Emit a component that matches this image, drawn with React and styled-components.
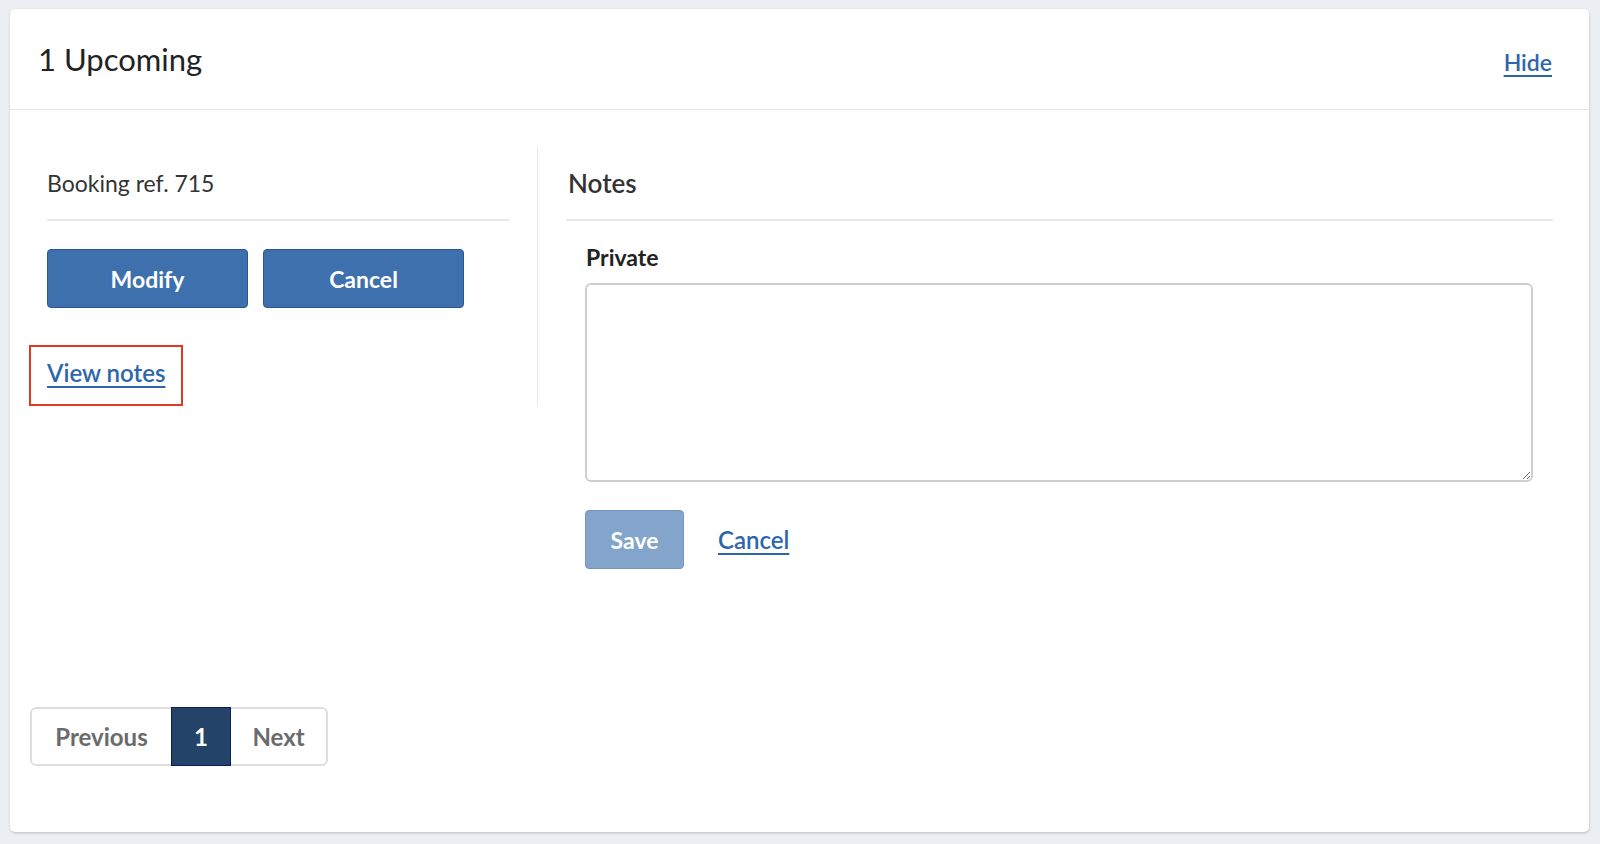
import React from "react";
import styled, { createGlobalStyle } from "styled-components";

const GlobalStyle = createGlobalStyle`
  html, body {
    margin: 0;
    padding: 0;
    background: #ebeef3;
  }
  body {
    font-family: Lato, "Noto Sans", sans-serif;
    color: #333;
  }
  * {
    box-sizing: border-box;
  }
`;

const Page = styled.main`
  padding: 9px 11px 12px 10px;
  min-height: 844px;
`;

const Card = styled.section`
  background: #fff;
  border-radius: 5px;
  box-shadow: 0 1px 3px rgba(0, 0, 0, 0.12), 1px 2px 2px rgba(0, 0, 0, 0.06);
  min-height: 823px;
  display: flex;
  flex-direction: column;
`;

const Header = styled.header`
  display: flex;
  align-items: center;
  justify-content: space-between;
  height: 101px;
  padding: 0 37px 0 28px;
  border-bottom: 1px solid #e4e6ea;
`;

const Title = styled.h2`
  margin: 0;
  font-size: 31px;
  font-weight: 400;
  color: #222;
`;

const Link = styled.a`
  color: #2d66ab;
  font-size: ${(p) => p.$size || "23px"};
  font-weight: 600;
  text-decoration: underline;
  text-underline-offset: 4px;
  text-decoration-thickness: 2px;
  cursor: pointer;
`;

const HeaderLink = styled(Link)`
  margin-top: 5px;
`;

const Body = styled.div`
  flex: 1;
  display: flex;
  flex-direction: column;
  justify-content: space-between;
  padding: 37px 36px 66px 37px;
`;

const Columns = styled.div`
  display: grid;
  grid-template-columns: 491px 1fr;
  align-items: start;
`;

const LeftCol = styled.div`
  padding-right: 28px;
  border-right: 1px solid #e6e8ec;
`;

const RightCol = styled.div`
  padding-left: 28px;
`;

const SectionHead = styled.div`
  height: 74px;
  display: flex;
  align-items: center;
  border-bottom: 2px solid #e8e9ec;
  font-size: ${(p) => (p.$big ? "26px" : "23px")};
  font-weight: ${(p) => (p.$big ? 600 : 400)};
  color: #333;
  padding-left: ${(p) => (p.$big ? "2px" : "0")};
`;

const ButtonRow = styled.div`
  display: flex;
  gap: 15px;
  margin-top: 28px;
`;

const Button = styled.button`
  width: ${(p) => p.$width || "201px"};
  height: 59px;
  border-radius: 4px;
  border: 1px solid ${(p) => (p.$disabled ? "#7396c2" : "#2c5890")};
  background: ${(p) => (p.$disabled ? "#83a5cc" : "#3e70ae")};
  color: #fff;
  font-family: inherit;
  font-size: 23px;
  font-weight: 700;
  cursor: ${(p) => (p.$disabled ? "default" : "pointer")};
`;

const Focused = styled.div`
  display: inline-flex;
  align-items: center;
  margin: 37px 0 0 -18px;
  height: 61px;
  padding: 0 16px 6px 16px;
  border: 2px solid #e03a22;
`;

const Form = styled.div`
  padding: 0 20px 0 19px;
`;

const Label = styled.label`
  display: block;
  margin-top: 22px;
  padding-left: 1px;
  font-size: 23px;
  font-weight: 700;
  color: #222;
`;

const TextArea = styled.textarea`
  display: block;
  width: 100%;
  height: 199px;
  margin-top: 12px;
  border: 2px solid #cfcfcf;
  border-radius: 6px;
  resize: vertical;
  font-family: inherit;
  font-size: 20px;
`;

const Actions = styled.div`
  display: flex;
  align-items: center;
  gap: 34px;
  margin-top: 28px;
`;

const Pager = styled.nav`
  display: inline-flex;
  align-self: flex-start;
  margin-left: -17px;
  border: 2px solid #dedede;
  border-radius: 6px;
  height: 59px;
`;

const PageItem = styled.span`
  display: flex;
  align-items: center;
  justify-content: center;
  width: ${(p) => p.$width};
  margin: ${(p) => (p.$active ? "-2px 0" : "0")};
  background: ${(p) => (p.$active ? "#234468" : "transparent")};
  border: ${(p) => (p.$active ? "1px solid #0d1d5a" : "none")};
  color: ${(p) => (p.$active ? "#fff" : "#6b6b6b")};
  font-size: 24px;
  font-weight: 700;
`;

export default function App() {
  return (
    <>
      <GlobalStyle />
      <Page>
        <Card>
          <Header>
            <Title>1 Upcoming</Title>
            <HeaderLink>Hide</HeaderLink>
          </Header>
          <Body>
            <Columns>
              <LeftCol>
                <SectionHead>Booking ref. 715</SectionHead>
                <ButtonRow>
                  <Button>Modify</Button>
                  <Button>Cancel</Button>
                </ButtonRow>
                <Focused>
                  <Link $size="24px">View notes</Link>
                </Focused>
              </LeftCol>
              <RightCol>
                <SectionHead $big>Notes</SectionHead>
                <Form>
                  <Label>Private</Label>
                  <TextArea />
                  <Actions>
                    <Button $disabled $width="99px">Save</Button>
                    <Link $size="24px">Cancel</Link>
                  </Actions>
                </Form>
              </RightCol>
            </Columns>
            <Pager>
              <PageItem $width="139px">Previous</PageItem>
              <PageItem $width="60px" $active>1</PageItem>
              <PageItem $width="95px">Next</PageItem>
            </Pager>
          </Body>
        </Card>
      </Page>
    </>
  );
}
